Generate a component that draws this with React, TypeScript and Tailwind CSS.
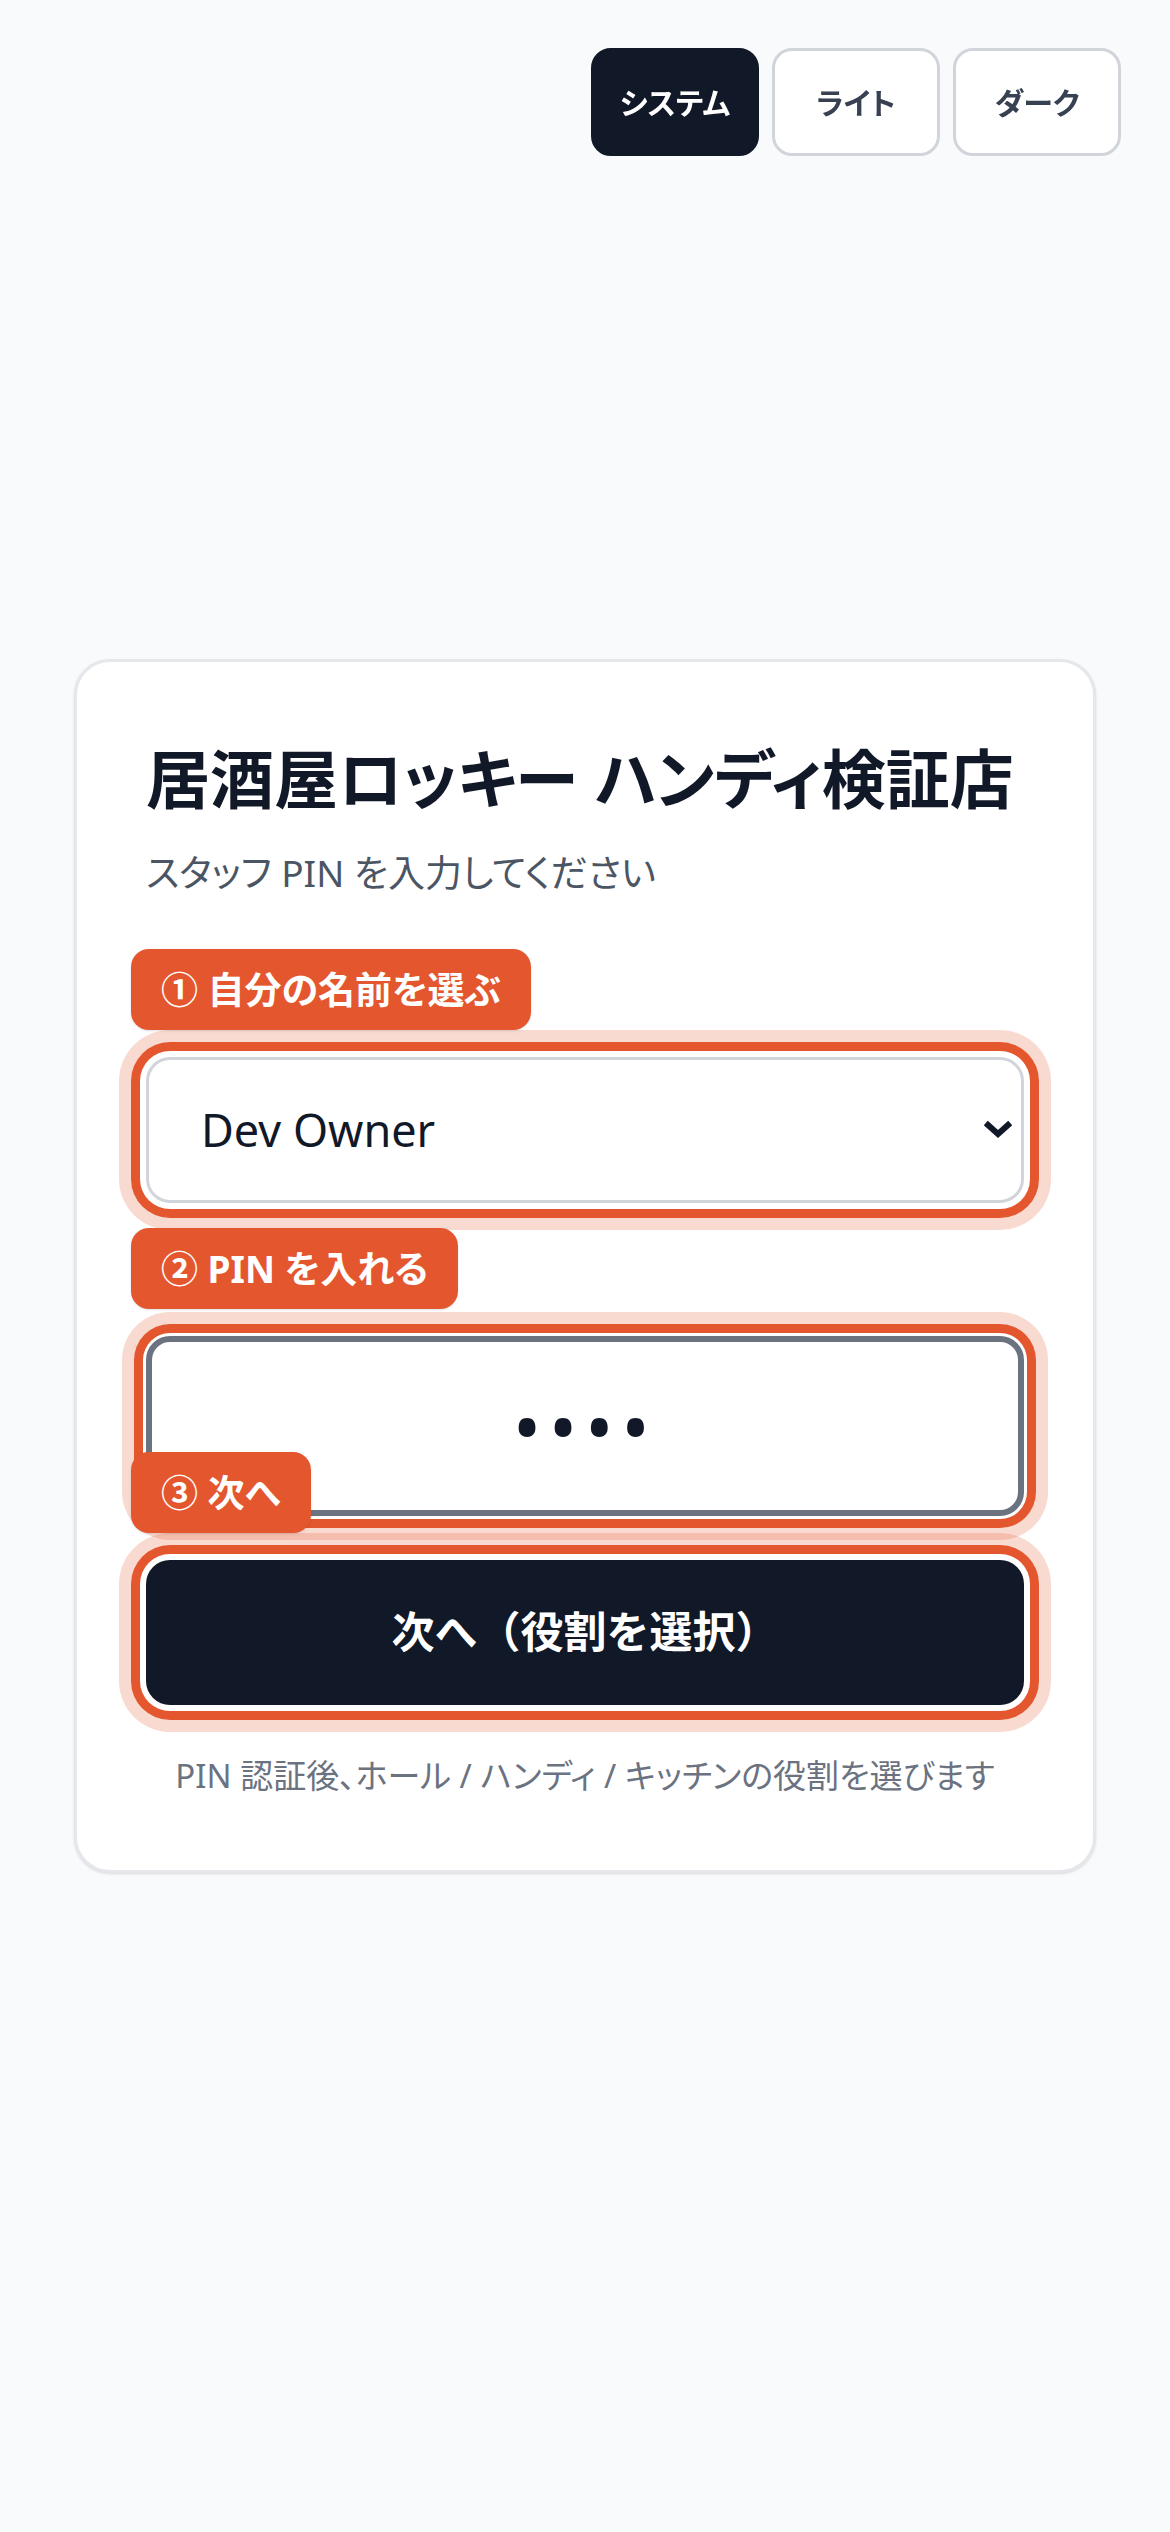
import { useState } from 'react';

type Theme = 'system' | 'light' | 'dark';

const themes: { key: Theme; label: string }[] = [
  { key: 'system', label: 'システム' },
  { key: 'light', label: 'ライト' },
  { key: 'dark', label: 'ダーク' },
];

function StepBadge({ children }: { children: React.ReactNode }) {
  return (
    <div className="absolute left-[-15px] bottom-[calc(100%+27px)] z-10 flex h-[81px] items-center whitespace-nowrap rounded-[18px] bg-[#e4572e] px-[30px] text-[37px] font-bold leading-[60px] text-white shadow-sm">
      {children}
    </div>
  );
}

export default function App() {
  const [theme, setTheme] = useState<Theme>('system');
  const [staff, setStaff] = useState('owner');

  return (
    <div
      className="relative flex min-h-screen items-center justify-center bg-[#f9fafb] text-[#111827] [font-feature-settings:'palt']"
      style={{ fontFamily: '"Noto Sans", "Noto Sans CJK JP", sans-serif' }}
    >
      {/* Theme switcher */}
      <div className="fixed right-[49px] top-[48px] flex gap-[13px]">
        {themes.map((t) => (
          <button
            key={t.key}
            onClick={() => setTheme(t.key)}
            className={`flex h-[108px] w-[168px] items-center justify-center rounded-[20px] border-[3px] text-[30px] font-bold
              ${theme === t.key
                ? 'border-[#111827] bg-[#111827] text-white'
                : 'border-[#d1d5db] bg-white text-[#374151]'
              }`}
          >
            {t.label}
          </button>
        ))}
      </div>

      {/* Login card */}
      <div className="w-[1022px] rounded-[36px] border-[3px] border-[#e5e7eb] bg-white px-[69px] pb-[70px] pt-[69px] shadow-sm">
        <h1 className="whitespace-nowrap text-[64px] font-bold leading-[96px] text-[#111827]">居酒屋ロッキー ハンディ検証店</h1>
        <p className="mt-[16px] text-[37px] leading-[60px] text-[#4b5563]">スタッフ PIN を入力してください</p>

        <form className="mt-[70px]" onSubmit={(e) => e.preventDefault()}>
          {/* Staff select */}
          <label className="mb-[24px] block h-[60px] text-[37px] font-medium leading-[60px] text-[#374151]">スタッフ名</label>
          <div className="relative">
            <StepBadge>① 自分の名前を選ぶ</StepBadge>
            <select
              value={staff}
              onChange={(e) => setStaff(e.target.value)}
              className="block h-[146px] w-full appearance-none rounded-[24px] border-[3px] border-[#d1d5db] bg-white pl-[52px] pr-[80px] text-[45px] text-[#111827] shadow-[0_0_0_6px_#fff,0_0_0_15px_#e4572e,0_0_0_27px_rgba(228,87,46,0.22)] outline-none"
            >
              <option value="owner">Dev Owner</option>
              <option value="hall">Dev Hall</option>
              <option value="kitchen">Dev Kitchen</option>
            </select>
            <svg
              className="pointer-events-none absolute right-[12px] top-1/2 h-[20px] w-[28px] -translate-y-1/2"
              viewBox="0 0 28 20"
              fill="none"
              stroke="#111827"
              strokeWidth="6"
              strokeLinecap="square"
            >
              <path d="M4 5 L14 14 L24 5" />
            </svg>
          </div>

          {/* PIN */}
          <label className="mb-[24px] mt-[49px] block h-[60px] text-[37px] font-medium leading-[60px] text-[#374151]">PIN（4桁）</label>
          <div className="relative">
            <StepBadge>② PIN を入れる</StepBadge>
            <input
              type="password"
              inputMode="numeric"
              defaultValue="1234"
              className="block h-[180px] w-full rounded-[24px] border-[6px] border-[#6b7280] bg-white text-center text-[76px] tracking-[0.1em] text-[#111827] shadow-[0_0_0_3px_#fff,0_0_0_12px_#e4572e,0_0_0_24px_rgba(228,87,46,0.22)] outline-none"
            />
          </div>

          {/* Submit */}
          <div className="relative mt-[44px]">
            <StepBadge>③ 次へ</StepBadge>
            <button
              type="submit"
              className="block h-[145px] w-full rounded-[24px] bg-[#111827] text-[43px] font-bold text-white shadow-[0_0_0_6px_#fff,0_0_0_15px_#e4572e,0_0_0_27px_rgba(228,87,46,0.22)] [font-feature-settings:normal]"
            >
              次へ（役割を選択）
            </button>
          </div>
        </form>

        <p className="mt-[47px] text-center text-[33px] leading-[48px] text-[#6b7280]">
          PIN 認証後、ホール / ハンディ / キッチンの役割を選びます
        </p>
      </div>
    </div>
  );
}
